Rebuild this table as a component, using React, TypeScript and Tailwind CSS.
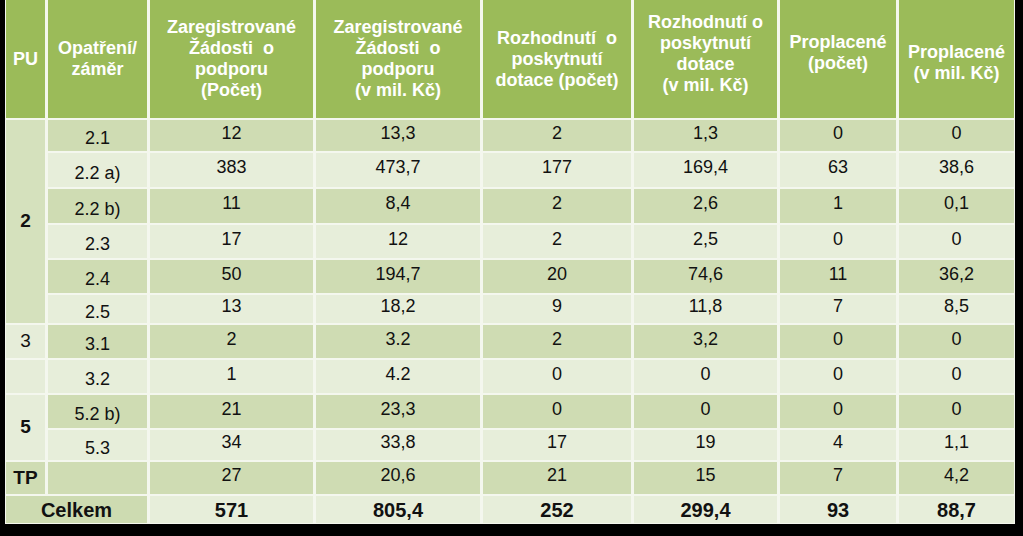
const rows = [
  { op: "2.1", v: ["12", "13,3", "2", "1,3", "0", "0"], bg: "bg-[#cfdcb3]" },
  { op: "2.2 a)", v: ["383", "473,7", "177", "169,4", "63", "38,6"], bg: "bg-[#e7eeda]" },
  { op: "2.2 b)", v: ["11", "8,4", "2", "2,6", "1", "0,1"], bg: "bg-[#cfdcb3]" },
  { op: "2.3", v: ["17", "12", "2", "2,5", "0", "0"], bg: "bg-[#e7eeda]" },
  { op: "2.4", v: ["50", "194,7", "20", "74,6", "11", "36,2"], bg: "bg-[#cfdcb3]" },
  { op: "2.5", v: ["13", "18,2", "9", "11,8", "7", "8,5"], bg: "bg-[#e7eeda]" },
  { op: "3.1", v: ["2", "3.2", "2", "3,2", "0", "0"], bg: "bg-[#cfdcb3]" },
  { op: "3.2", v: ["1", "4.2", "0", "0", "0", "0"], bg: "bg-[#e7eeda]" },
  { op: "5.2 b)", v: ["21", "23,3", "0", "0", "0", "0"], bg: "bg-[#cfdcb3]" },
  { op: "5.3", v: ["34", "33,8", "17", "19", "4", "1,1"], bg: "bg-[#e7eeda]" },
  { op: "", v: ["27", "20,6", "21", "15", "7", "4,2"], bg: "bg-[#cfdcb3]" },
];

const totals = ["571", "805,4", "252", "299,4", "93", "88,7"];

// PU column cells, placed before the row they start on
const pu: Record<number, { label: string; span: string; bg: string; bold: boolean }> = {
  0: { label: "2", span: "row-span-6", bg: "bg-[#d5e1bd]", bold: true },
  6: { label: "3", span: "", bg: "bg-[#e6edd9]", bold: false },
  7: { label: "", span: "", bg: "bg-[#e6edd9]", bold: false },
  8: { label: "5", span: "row-span-2", bg: "bg-[#e6edd9]", bold: true },
  10: { label: "TP", span: "", bg: "bg-[#cfdcb3]", bold: true },
};

function Head({ lines, extra = "" }: { lines: string[]; extra?: string }) {
  return (
    <div className={`bg-[#9bbb59] flex items-center justify-center text-center text-white font-bold text-[18px] leading-[21px] ${extra}`}>
      <div>
        {lines.map((l, i) => (
          <div key={i} className="whitespace-pre">{l}</div>
        ))}
      </div>
    </div>
  );
}

export default function App() {
  return (
    <div className="w-[1023px] h-[536px] bg-black font-['Liberation_Sans',Arial,sans-serif] text-[#111]">
      <div className="ml-[5px] w-[1010px] bg-[#f4f7ee] px-px pb-px grid grid-cols-[39px_99px_163px_164px_148px_143px_116px_115px] grid-rows-[118px_31px_34px_34px_33px_33px_28px_33px_33px_33px_30px_32px_27px] gap-x-[3px] gap-y-[2px]">
        <Head lines={["PU"]} />
        <Head lines={["Opatření/", "záměr"]} />
        <Head lines={["Zaregistrované", "Žádosti  o", "podporu", "(Počet)"]} />
        <Head lines={["Zaregistrované", "Žádosti  o", "podporu", "(v mil. Kč)"]} />
        <Head lines={["Rozhodnutí  o", "poskytnutí", "dotace (počet)"]} />
        <Head lines={["Rozhodnutí o", "poskytnutí", "dotace", "(v mil. Kč)"]} extra="pb-[10px]" />
        <Head lines={["Proplacené", "(počet)"]} extra="pb-[12px]" />
        <Head lines={["Proplacené", "(v mil. Kč)"]} extra="pt-[8px]" />

        {rows.map((r, i) => {
          const p = pu[i];
          return [
            p && (
              <div
                key={`pu${i}`}
                className={`${p.span} ${p.bg} flex items-center justify-center text-[19px] ${p.bold ? "font-bold" : ""}`}
              >
                {p.label}
              </div>
            ),
            <div key={`op${i}`} className={`${r.bg} flex items-center justify-center pt-[6px] text-[18px]`}>
              {r.op}
            </div>,
            ...r.v.map((v, j) => (
              <div key={`v${i}-${j}`} className={`${r.bg} flex items-center justify-center pb-[5px] text-[18px]`}>
                {v}
              </div>
            )),
          ];
        })}

        <div className="col-span-2 bg-[#cddbb1] flex items-center justify-center font-bold text-[20px]">Celkem</div>
        {totals.map((t, j) => (
          <div key={`t${j}`} className="bg-[#e7eeda] flex items-center justify-center font-bold text-[20px]">
            {t}
          </div>
        ))}
      </div>
    </div>
  );
}
